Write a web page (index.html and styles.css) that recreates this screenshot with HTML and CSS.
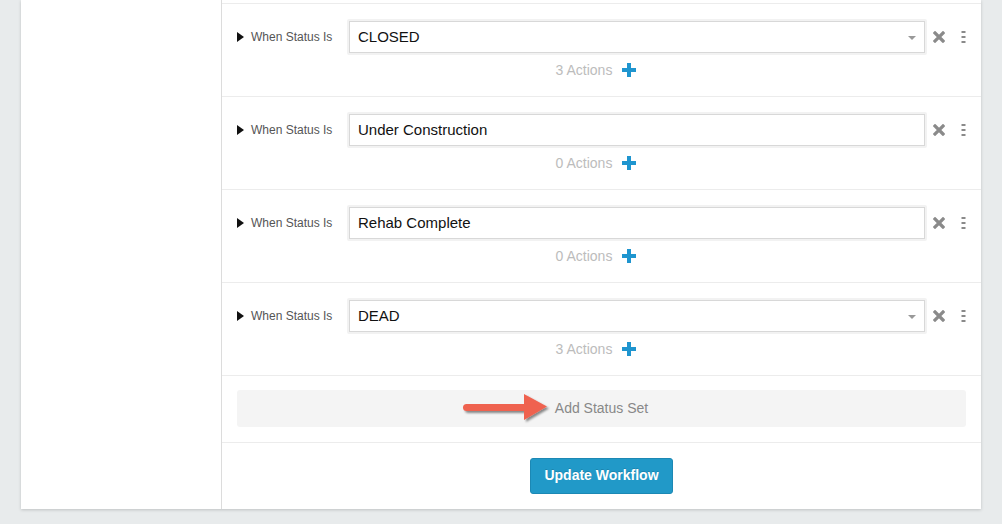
FILE: index.html
```html
<!DOCTYPE html>
<html>
<head>
<meta charset="utf-8">
<link rel="stylesheet" href="styles.css">
</head>
<body>
<div class="page">
  <div class="card">
    <aside class="side"></aside>
    <main class="main">
      <div class="top-gap"></div>

      <div class="row">
        <div class="row-head">
          <div class="label"><span class="tri"></span><span>When Status Is</span></div>
          <div class="field"><span class="value">CLOSED</span><span class="caret"></span></div>
          <span class="icon-x"><svg width="12" height="12" viewBox="0 0 12 12"><path d="M2 2L10 10M10 2L2 10" stroke="#8a8a8a" stroke-width="3.2" stroke-linecap="square"/></svg></span>
          <span class="icon-kebab"><svg width="5" height="14" viewBox="0 0 5 14"><rect x="0.5" y="1" width="4" height="2" fill="#8a8a8a"/><rect x="0.5" y="6" width="4" height="2" fill="#8a8a8a"/><rect x="0.5" y="11" width="4" height="2" fill="#8a8a8a"/></svg></span>
        </div>
        <div class="actions"><span>3 Actions</span><svg class="plus" width="14" height="14" viewBox="0 0 14 14"><rect x="5" y="0" width="4" height="14" fill="#1f95cf"/><rect x="0" y="5" width="14" height="4" fill="#1f95cf"/></svg></div>
      </div>

      <div class="row">
        <div class="row-head">
          <div class="label"><span class="tri"></span><span>When Status Is</span></div>
          <div class="field"><span class="value">Under Construction</span></div>
          <span class="icon-x"><svg width="12" height="12" viewBox="0 0 12 12"><path d="M2 2L10 10M10 2L2 10" stroke="#8a8a8a" stroke-width="3.2" stroke-linecap="square"/></svg></span>
          <span class="icon-kebab"><svg width="5" height="14" viewBox="0 0 5 14"><rect x="0.5" y="1" width="4" height="2" fill="#8a8a8a"/><rect x="0.5" y="6" width="4" height="2" fill="#8a8a8a"/><rect x="0.5" y="11" width="4" height="2" fill="#8a8a8a"/></svg></span>
        </div>
        <div class="actions"><span>0 Actions</span><svg class="plus" width="14" height="14" viewBox="0 0 14 14"><rect x="5" y="0" width="4" height="14" fill="#1f95cf"/><rect x="0" y="5" width="14" height="4" fill="#1f95cf"/></svg></div>
      </div>

      <div class="row">
        <div class="row-head">
          <div class="label"><span class="tri"></span><span>When Status Is</span></div>
          <div class="field"><span class="value">Rehab Complete</span></div>
          <span class="icon-x"><svg width="12" height="12" viewBox="0 0 12 12"><path d="M2 2L10 10M10 2L2 10" stroke="#8a8a8a" stroke-width="3.2" stroke-linecap="square"/></svg></span>
          <span class="icon-kebab"><svg width="5" height="14" viewBox="0 0 5 14"><rect x="0.5" y="1" width="4" height="2" fill="#8a8a8a"/><rect x="0.5" y="6" width="4" height="2" fill="#8a8a8a"/><rect x="0.5" y="11" width="4" height="2" fill="#8a8a8a"/></svg></span>
        </div>
        <div class="actions"><span>0 Actions</span><svg class="plus" width="14" height="14" viewBox="0 0 14 14"><rect x="5" y="0" width="4" height="14" fill="#1f95cf"/><rect x="0" y="5" width="14" height="4" fill="#1f95cf"/></svg></div>
      </div>

      <div class="row">
        <div class="row-head">
          <div class="label"><span class="tri"></span><span>When Status Is</span></div>
          <div class="field"><span class="value">DEAD</span><span class="caret"></span></div>
          <span class="icon-x"><svg width="12" height="12" viewBox="0 0 12 12"><path d="M2 2L10 10M10 2L2 10" stroke="#8a8a8a" stroke-width="3.2" stroke-linecap="square"/></svg></span>
          <span class="icon-kebab"><svg width="5" height="14" viewBox="0 0 5 14"><rect x="0.5" y="1" width="4" height="2" fill="#8a8a8a"/><rect x="0.5" y="6" width="4" height="2" fill="#8a8a8a"/><rect x="0.5" y="11" width="4" height="2" fill="#8a8a8a"/></svg></span>
        </div>
        <div class="actions"><span>3 Actions</span><svg class="plus" width="14" height="14" viewBox="0 0 14 14"><rect x="5" y="0" width="4" height="14" fill="#1f95cf"/><rect x="0" y="5" width="14" height="4" fill="#1f95cf"/></svg></div>
      </div>

      <div class="add-section">
        <div class="add-box">
          <span>Add Status Set</span>
          <svg class="arrow" width="100" height="36" viewBox="0 0 100 36">
            <defs>
              <filter id="sh" x="-20%" y="-40%" width="140%" height="180%">
                <feDropShadow dx="2" dy="2" stdDeviation="1.2" flood-color="#000" flood-opacity="0.45"/>
              </filter>
            </defs>
            <g filter="url(#sh)">
              <line x1="7.5" y1="16.5" x2="67" y2="16.5" stroke="#ef6250" stroke-width="7" stroke-linecap="round"/>
              <path d="M65 3 L88 15.5 L65 29 Z" fill="#ef6250"/>
            </g>
          </svg>
        </div>
      </div>

      <div class="footer">
        <button class="btn">Update Workflow</button>
      </div>
    </main>
  </div>
</div>
</body>
</html>
```
FILE: styles.css
```css
* { box-sizing: border-box; }
html, body {
  margin: 0;
  padding: 0;
  background: #e8ebec;
  font-family: "Liberation Sans", Arial, Helvetica, sans-serif;
}
.page {
  width: 1002px;
  height: 524px;
  overflow: hidden;
  padding-left: 21px;
}
.card {
  width: 960px;
  height: 509px;
  background: #fff;
  display: flex;
  box-shadow: 0 1px 3px rgba(0,0,0,0.18);
}
.side {
  width: 201px;
  border-right: 1px solid #dcdcdc;
  flex: none;
}
.main {
  flex: 1;
  display: flex;
  flex-direction: column;
}
.top-gap { height: 3px; }
.row {
  height: 93px;
  border-top: 1px solid #ececec;
  padding: 15px 15px 0 15px;
}
.row-head {
  display: flex;
  align-items: center;
  height: 36px;
}
.label {
  width: 110px;
  flex: none;
  display: flex;
  align-items: center;
  font-size: 12px;
  color: #555;
}
.tri {
  width: 0;
  height: 0;
  border-left: 7px solid #111;
  border-top: 5px solid transparent;
  border-bottom: 5px solid transparent;
  margin-right: 7px;
}
.field {
  width: 580px;
  height: 36px;
  border: 2px solid #f2f2f2;
  border-radius: 2px;
  flex: none;
  display: flex;
  position: relative;
}
.field .value {
  flex: 1;
  border: 1px solid #d8d8d8;
  display: flex;
  align-items: center;
  padding-left: 8px;
  padding-bottom: 2px;
  font-size: 15px;
  color: #111;
}
.caret {
  position: absolute;
  right: 9px;
  top: 15px;
  width: 0;
  height: 0;
  border-top: 4px solid #999;
  border-left: 4px solid transparent;
  border-right: 4px solid transparent;
}
.icon-x {
  width: 24px;
  display: flex;
  justify-content: center;
  margin-left: 0;
}
.icon-kebab {
  flex: 1;
  display: flex;
  justify-content: flex-end;
}
.actions {
  display: flex;
  align-items: center;
  justify-content: center;
  gap: 10px;
  margin-top: 5px;
  font-size: 14px;
  color: #bcbcbc;
  padding-right: 11px;
  height: 20px;
}
.plus { display: block; }
.add-section {
  border-top: 1px solid #ececec;
  padding: 14px 15px 15px 15px;
}
.add-box {
  height: 37px;
  background: #f4f4f4;
  border-radius: 3px;
  display: flex;
  align-items: center;
  justify-content: center;
  font-size: 14px;
  color: #888;
  position: relative;
  padding-bottom: 2px;
}
.arrow {
  position: absolute;
  left: 222px;
  top: 1px;
}
.footer {
  border-top: 1px solid #ececec;
  flex: 1;
  display: flex;
  justify-content: center;
  padding-top: 15px;
}
.btn {
  width: 143px;
  height: 36px;
  background: #2199c8;
  border: 1px solid #1c88b4;
  border-radius: 3px;
  color: #fff;
  font-family: "Liberation Sans", Arial, sans-serif;
  font-weight: bold;
  font-size: 14px;
  text-shadow: 0 -1px 0 rgba(0,0,0,0.15);
  padding: 0 0 2px 0;
}
```
